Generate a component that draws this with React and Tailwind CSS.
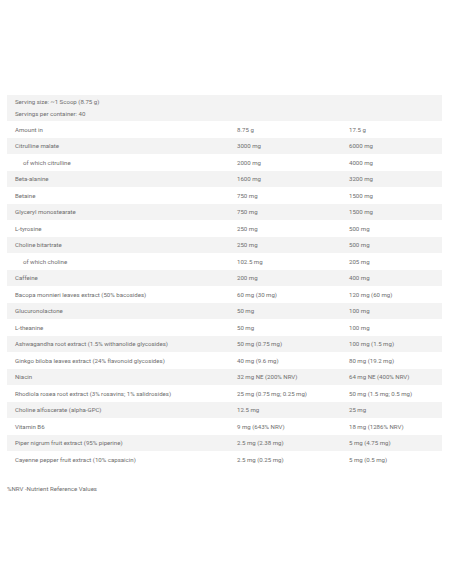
import React from "react";

const rows = [
  ["Amount in", "8.75 g", "17.5 g"],
  ["Citrulline malate", "3000 mg", "6000 mg"],
  ["of which citrulline", "2000 mg", "4000 mg", true],
  ["Beta-alanine", "1600 mg", "3200 mg"],
  ["Betaine", "750 mg", "1500 mg"],
  ["Glyceryl monostearate", "750 mg", "1500 mg"],
  ["L-tyrosine", "250 mg", "500 mg"],
  ["Choline bitartrate", "250 mg", "500 mg"],
  ["of which choline", "102.5 mg", "205 mg", true],
  ["Caffeine", "200 mg", "400 mg"],
  ["Bacopa monnieri leaves extract (50% bacosides)", "60 mg (30 mg)", "120 mg (60 mg)"],
  ["Glucuronolactone", "50 mg", "100 mg"],
  ["L-theanine", "50 mg", "100 mg"],
  ["Ashwagandha root extract (1.5% withanolide glycosides)", "50 mg (0.75 mg)", "100 mg (1.5 mg)"],
  ["Ginkgo biloba leaves extract (24% flavonoid glycosides)", "40 mg (9.6 mg)", "80 mg (19.2 mg)"],
  ["Niacin", "32 mg NE (200% NRV)", "64 mg NE (400% NRV)"],
  ["Rhodiola rosea root extract (3% rosavins; 1% salidrosides)", "25 mg (0.75 mg; 0.25 mg)", "50 mg (1.5 mg; 0.5 mg)"],
  ["Choline alfoscerate (alpha-GPC)", "12.5 mg", "25 mg"],
  ["Vitamin B6", "9 mg (643% NRV)", "18 mg (1286% NRV)"],
  ["Piper nigrum fruit extract (95% piperine)", "2.5 mg (2.38 mg)", "5 mg (4.75 mg)"],
  ["Cayenne pepper fruit extract (10% capsaicin)", "2.5 mg (0.25 mg)", "5 mg (0.5 mg)"],
];

export default function App() {
  return (
    <div
      className="w-[452px] h-[584px] bg-white pt-[95px] px-[7px] text-[6.1px] leading-[11px] text-[#6e6e6e]"
      style={{ fontFamily: "Roboto, 'Liberation Sans', sans-serif" }}
    >
      <div className="w-[435px]">
        <div className="bg-[#f3f3f3] h-[26px] pl-[8px] pt-[1px] flex flex-col">
          <span className="leading-[11.5px]">Serving size: ~1 Scoop (8.75 g)</span>
          <span className="leading-[11.5px]">Servings per container: 40</span>
        </div>
        {rows.map((r, i) => (
          <div
            key={i}
            className={
              "grid grid-cols-[222px_112px_101px] h-[16.5px] items-center " +
              (i % 2 === 1 ? "bg-[#f3f3f3]" : "bg-white")
            }
          >
            <span className={r[3] ? "pl-[16px]" : "pl-[8px]"}>{r[0]}</span>
            <span className="pl-[8px]">{r[1]}</span>
            <span className="pl-[8px]">{r[2]}</span>
          </div>
        ))}
      </div>
      <p className="mt-[15px]">%NRV -Nutrient Reference Values</p>
    </div>
  );
}
